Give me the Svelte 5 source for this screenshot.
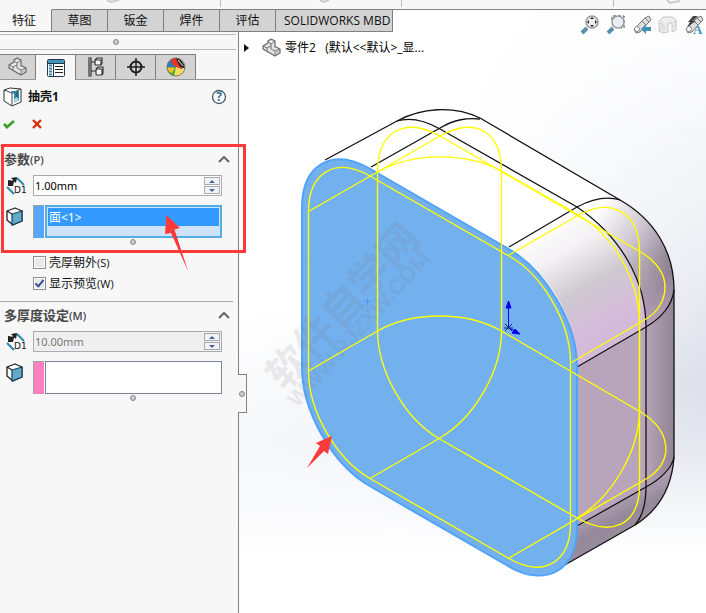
<script lang="ts">
	type Section = {
		id: string;
		title: string;
		key: string;
		value: string;
		disabled: boolean;
		swatch: string;
		items: string[];
	};

	const commandTabs = ['特征', '草图', '钣金', '焊件', '评估', 'SOLIDWORKS MBD'];
	const managerTabs = [
		{ id: 'tree', label: '设计树' },
		{ id: 'props', label: '属性' },
		{ id: 'config', label: '配置' },
		{ id: 'dimxpert', label: '尺寸' },
		{ id: 'display', label: '外观' },
	];
	const viewTools = [
		{ id: 'fit', label: '整屏显示' },
		{ id: 'area', label: '局部放大' },
		{ id: 'previous', label: '上一视图' },
		{ id: 'section', label: '剖面视图' },
		{ id: 'annotation', label: '注解视图' },
	];
	const sections: Section[] = [
		{ id: 'params', title: '参数', key: '(P)', value: '1.00mm', disabled: false, swatch: 'blue', items: ['面<1>'] },
		{ id: 'multi', title: '多厚度设定', key: '(M)', value: '10.00mm', disabled: true, swatch: 'pink', items: [] },
	];

	let activeCommand = $state('特征');
	let activeManager = $state('props');
	let outward = $state(false);
	let preview = $state(true);
	let closed = $state<string[]>([]);

	function toggle(id: string) {
		closed = closed.includes(id) ? closed.filter((c) => c !== id) : [...closed, id];
	}
</script>

{#snippet partIcon()}
	<svg class="part-icon" width="20" height="20" viewBox="0 0 20 20" aria-hidden="true">
		<path d="M1 8 L6 5 V3 L9 1 L13 3 V9 L14 9 L18 11 V15 L13 18 L1 11 Z" fill="#e4e4e4" stroke="#666" stroke-width="1.2" stroke-linejoin="round" />
		<path d="M1 8 L5 10 L9 8 V6 L6 4 M9 6 L13 3 M5 10 V13 M9 8 V11 L13 13 L18 11 M13 13 V18" fill="none" stroke="#777" stroke-width="1" />
		<path d="M14 14 L17 12 V14 L14 16 Z" fill="#bbb" />
	</svg>
{/snippet}

{#snippet managerIcon(id: string)}
	{#if id === 'tree'}
		{@render partIcon()}
	{:else if id === 'props'}
		<svg width="18" height="18" viewBox="0 0 18 18" aria-hidden="true">
			<rect x=".5" y=".5" width="17" height="17" rx="1" fill="#fff" stroke="#24394a" />
			<rect x="1" y="1" width="16" height="3" fill="#4496bd" />
			<path d="M1 4.500 H17 M6.500 5 V17" stroke="#24394a" />
			<path d="M2 6.500 H5 M2 9.500 H5 M2 12.500 H5 M2 15.500 H5" stroke="#3684ad" stroke-width="2" />
			<path d="M8 7.500 H16 M8 10.500 H16 M8 13.500 H16" stroke="#222" />
		</svg>
	{:else if id === 'config'}
		<svg width="18" height="20" viewBox="0 0 18 20" fill="none" stroke="#333" stroke-width="1.200" aria-hidden="true">
			<path d="M1 1 H4 V19 H1 M2 2 V18 M4 5 H8 M4 14 H9" />
			<rect x="8" y="3" width="6" height="5" rx="1" fill="#f5f5f5" />
			<path d="M8 3 L10 1 H15 V6 L14 8" />
			<rect x="9" y="12" width="6" height="6" rx="1" fill="#f5f5f5" />
			<path d="M9 12 L11 10 H16 V16 L15 18" />
		</svg>
	{:else if id === 'dimxpert'}
		<svg width="18" height="18" viewBox="0 0 18 18" fill="none" stroke="#1c1c1c" stroke-width="2" aria-hidden="true">
			<circle cx="9" cy="9" r="5.500" />
			<path d="M9 0 V18 M0 9 H18" stroke-width="1.500" />
		</svg>
	{:else}
		<svg width="20" height="20" viewBox="0 0 20 20" aria-hidden="true">
			<path d="M10 10 L1 11 A9 9 0 0 1 10 1 Z" fill="#2680be" />
			<path d="M5 2.500 Q9 0 13 2 L17 14 L10 10 Q5 8 5 2.500 Z" fill="#e8332a" />
			<path d="M10 10 L18 13 A9 9 0 0 1 8 19 Z" fill="#f3dc62" />
			<path d="M1 10 L10 10 L8 19 A9 9 0 0 1 1 10 Z" fill="#4cae31" />
			<path d="M1 11 Q6 10 9 11 L6 16 Q2 15 1 11Z" fill="#f5bd2c" />
			<path d="M10 1 Q17 2 19 11 Q13 12 10 1Z" fill="#222" />
			<path d="M12 3 L17 9" stroke="#eee" />
			<circle cx="10" cy="10" r="9" fill="none" stroke="#77664d" stroke-width=".8" />
		</svg>
	{/if}
{/snippet}

{#snippet thicknessIcon()}
	<svg class="row-icon" width="20" height="20" viewBox="0 0 20 20" aria-hidden="true">
		<path d="M1 11 L8 18 M11 2 L18 9" stroke="#2d87a9" stroke-width="2" />
		<path d="M3 9 L10 3" stroke="#222" stroke-width="2" />
		<path d="M2 4 L8 5 L7 10 L2 10 Z M5 2 L11 1 L10 7 Z" fill="#222" />
		<text x="8" y="17">D1</text>
	</svg>
{/snippet}

{#snippet faceIcon()}
	<svg class="row-icon" width="18" height="20" viewBox="0 0 18 20" aria-hidden="true">
		<path d="M1 4 L9 1 L16 4 V14 L7 18 L1 13 Z" fill="#fff" stroke="#222" stroke-width="1.300" stroke-linejoin="round" />
		<path d="M6 7 L16 4 V14 L6 18 Z" fill="#65a9c8" stroke="#174b66" stroke-width="1.300" />
		<path d="M1 4 L6 7" stroke="#222" stroke-width="1.300" />
	</svg>
{/snippet}

{#snippet viewIcon(id: string)}
	<svg width="20" height="20" viewBox="0 0 20 20" aria-hidden="true">
		{#if id === 'fit' || id === 'area'}
			{#if id === 'area'}
				<path d="M6 5 V1 H18 V13 H15" fill="none" stroke="#444" stroke-dasharray="3 2" />
			{/if}
			<path d="M2 18 L7 13" stroke="#5b8fae" stroke-width="4" />
			<circle cx="12" cy="7" r="6" fill="#e9eff4" stroke="#999" stroke-width="1.500" />
			{#if id === 'fit'}
				<path d="M12 2 L14 4 H10Z M12 12 L10 10 H14Z M7 7 L9 5 V9Z M17 7 L15 9 V5Z" fill="#222" />
			{/if}
		{:else if id === 'section'}
			<path d="M1 6 L5 2 H14 L18 5 V15 L14 17 V8 H10 V17 L5 18 L1 16 Z" fill="#eee" stroke="#c4c4c4" />
			<path d="M2 9 L5 7 M2 12 L6 9 M2 15 L7 11 M5 16 L8 13 M15 8 L17 6 M15 12 L17 10" stroke="#ccc" />
		{:else}
			<path d="M2 14 L10 6 L13 3 L17 1 L19 5 L16 8 L8 17 L4 18 Z" fill="#ddd" stroke="#777" stroke-linejoin="round" />
			<path d="M10 6 L14 10 M13 3 L17 7" stroke="#777" />
			<circle cx="5" cy="14" r="2.500" fill="#fff" stroke="#888" />
			{#if id === 'previous'}
				<path d="M9 14 L14 9 V12 H19 V16 H14 V19 Z" fill="#438eb7" />
			{:else}
				<path d="M4 7 L9 1 H14 L9 6 H12 L3 12 L6 7Z" fill="#444" />
				<text class="view-letter" x="9" y="19">A</text>
			{/if}
		{/if}
	</svg>
{/snippet}

<div class="app">
	<header>
		<div class="ribbon-edge">
			<svg viewBox="0 0 706 9" preserveAspectRatio="xMinYMin slice" aria-hidden="true">
				<path d="M107 0 L111 2 L119 0 M320 0 L324 2 L329 0 M667 0 L670 3 L680 1" fill="none" stroke="#ccc" stroke-width="2" />
				<path d="M220.500 0 V7 M401.500 0 V7 M613.500 0 V7" stroke="#bbb" />
			</svg>
		</div>
		<nav class="command-tabs">
			{#each commandTabs as tab}
				<button class:active={activeCommand === tab} onclick={() => (activeCommand = tab)}>{tab}</button>
			{/each}
		</nav>
	</header>

	<main>
		<aside>
			<div class="grip"><i class="dot"></i></div>
			<nav class="manager-tabs">
				{#each managerTabs as tab}
					<button
						class:active={activeManager === tab.id}
						aria-label={tab.label}
						onclick={() => (activeManager = tab.id)}
					>
						{@render managerIcon(tab.id)}
					</button>
				{/each}
			</nav>

			<div class="feature-title">
				<svg width="20" height="20" viewBox="0 0 20 20" aria-hidden="true">
					<path d="M1 3 L7 1 L18 2 V15 L9 19 L1 14 Z" fill="#fff" stroke="#333" stroke-linejoin="round" />
					<path d="M1 3 L9 6 L18 2 M9 6 V19" fill="none" stroke="#444" />
					<path d="M8 4 L16 4 V13 L11 16 L11 7 Z" fill="#2f86aa" />
					<path d="M11 12 L14 10 L16 13 L11 16 Z" fill="#a7d5e6" />
					<path d="M14 5 V10" stroke="#174f6b" />
				</svg>
				<h1>抽壳1</h1>
				<button class="plain help" aria-label="帮助">
					<svg width="16" height="16" viewBox="0 0 16 16" aria-hidden="true">
						<circle cx="8" cy="8" r="6.500" fill="#fff" stroke="#41576a" stroke-width="1.300" />
						<text class="question" x="8" y="12">?</text>
					</svg>
				</button>
			</div>
			<div class="confirm">
				<button class="plain" aria-label="确定">
					<svg width="14" height="12" viewBox="0 0 14 12" aria-hidden="true">
						<path d="M2 6 L5 9 L12 3" fill="none" stroke="#3ca22c" stroke-width="2.800" />
					</svg>
				</button>
				<button class="plain" aria-label="取消">
					<svg width="12" height="12" viewBox="0 0 12 12" aria-hidden="true">
						<path d="M2 2 L10 10 M10 2 L2 10" stroke="#d92b0c" stroke-width="2.400" />
					</svg>
				</button>
			</div>

			{#each sections as s}
				<section>
					<h2>
						<span>{s.title}<small>{s.key}</small></span>
						<button class="plain" aria-label="折叠{s.title}" onclick={() => toggle(s.id)}>
							<svg width="12" height="8" viewBox="0 0 12 8" aria-hidden="true">
								<path d="M1 7 L6 2 L11 7" fill="none" stroke="#666" stroke-width="2" />
							</svg>
						</button>
					</h2>
					{#if !closed.includes(s.id)}
						<div class="row">
							<label for="{s.id}-thickness" aria-label="厚度">{@render thicknessIcon()}</label>
							<div class="spin" class:disabled={s.disabled}>
								<input id="{s.id}-thickness" type="text" value={s.value} disabled={s.disabled} />
								<div class="spin-buttons">
									<button aria-label="增加" disabled={s.disabled}><i class="up"></i></button>
									<button aria-label="减少" disabled={s.disabled}><i class="down"></i></button>
								</div>
							</div>
						</div>
						<div class="row faces">
							<label for="{s.id}-faces" aria-label="面">{@render faceIcon()}</label>
							<i class="swatch {s.swatch}"></i>
							<select id="{s.id}-faces" multiple size="2" class:focused={s.items.length > 0}>
								{#each s.items as item}
									<option selected>{item}</option>
								{/each}
							</select>
						</div>
						<div class="resize"><i class="dot"></i></div>
						{#if s.id === 'params'}
							<div class="checks">
								<label><input type="checkbox" bind:checked={outward} /><span>壳厚朝外<small>(S)</small></span></label>
								<label><input type="checkbox" bind:checked={preview} /><span>显示预览<small>(W)</small></span></label>
							</div>
						{/if}
					{/if}
				</section>
			{/each}
			<button class="splitter" aria-label="收起面板"><i class="dot"></i></button>
		</aside>

		<div class="viewport">
			<svg class="scene" viewBox="239 10 467 603" role="img" aria-label="零件2">
				<defs>
					<linearGradient id="corner" gradientUnits="userSpaceOnUse" x1="545" y1="225" x2="612" y2="340">
						<stop offset="0" stop-color="#fff" />
						<stop offset=".25" stop-color="#f3f1f3" />
						<stop offset=".55" stop-color="#cfc9d0" />
						<stop offset=".85" stop-color="#d6bcdc" />
						<stop offset="1" stop-color="#d2b9d8" />
					</linearGradient>
					<linearGradient id="cap" gradientUnits="userSpaceOnUse" x1="595" y1="215" x2="675" y2="265">
						<stop offset="0" stop-color="#fff" />
						<stop offset=".5" stop-color="#cdc3cf" />
						<stop offset="1" stop-color="#837785" />
					</linearGradient>
					<linearGradient id="capFade" x1="0" y1="0" x2="0" y2="1">
						<stop offset=".45" stop-color="#cbb2d0" stop-opacity="0" />
						<stop offset="1" stop-color="#c4abc9" stop-opacity=".8" />
					</linearGradient>
					<linearGradient id="side">
						<stop offset="0" stop-color="#b6a3b9" />
						<stop offset=".6" stop-color="#9f90a1" />
						<stop offset="1" stop-color="#938695" />
					</linearGradient>
					<linearGradient id="bottom" gradientUnits="userSpaceOnUse" x1="610" y1="500" x2="628" y2="535">
						<stop offset="0" stop-color="#b3a0b6" />
						<stop offset=".55" stop-color="#94889a" />
						<stop offset="1" stop-color="#9b8d9d" />
					</linearGradient>
				</defs>

				<!-- body -->
				<path d="M325 160 L397 121 C421 108 453 105 480 118 L620 200 C655 220 674 252 674 290 V457 C672 487 659 510 635 525 L563 566 Z" fill="#fff" />
				<path d="M508 248 L577 207 C620 236 646 280 646 327 L577 367 C577 320 550 272 508 248 Z" fill="url(#corner)" />
				<path d="M577 207 C594 198 607 196 620 200 C655 220 674 252 674 290 C672 306 661 318 646 327 C646 280 620 236 577 207 Z" fill="url(#cap)" />
				<path d="M577 207 C594 198 607 196 620 200 C655 220 674 252 674 290 C672 306 661 318 646 327 C646 280 620 236 577 207 Z" fill="url(#capFade)" />
				<path d="M577 367 L646 327 V487 L577 527 Z" fill="#b8a5bb" />
				<path d="M646 327 C661 318 672 306 674 290 V457 C672 470 661 479 646 487 Z" fill="url(#side)" />
				<path d="M577 527 L646 487 C661 479 672 470 674 457 C672 487 659 510 635 525 L563 566 Z" fill="url(#bottom)" />

				<g class="edge">
					<path d="M325 160 L397 121 C421 108 453 105 480 118 L620 200 C655 220 674 252 674 290 V457 C672 487 659 510 635 525 L563 566" />
					<path d="M371 167 L440 128 C455 119 467 118 480 119" />
					<path d="M397 121 C411 117 424 120 440 129 L577 207 C620 236 646 280 646 327 V487 C646 505 642 517 635 525" />
					<path d="M509 247 L577 207 C594 198 607 196 620 200" />
					<path d="M577 367 L646 327 C661 318 672 306 674 290" />
					<path d="M577 526 L646 487 C661 479 672 468 674 457" />
				</g>

				<path
					class="face"
					d="M302 208 C302 164 332 147 370.500 169 L508 248.500 C546 270.500 577 323 577 367 V527 C577 571 546 588 508 566 L370.500 486.500 C332 464.500 302 411 302 367 Z"
				/>

				<g class="watermark" transform="translate(285 392) rotate(-48)">
					<text x="0" y="0">软件自学网</text>
					<text class="site" x="-4" y="20">WWW.RJZXW.COM</text>
				</g>

				<g class="preview">
					<path d="M308.500 211.500 C308.500 172 336 156.500 370 176 L509 256 C543 275 570.500 323 570.500 363 V523 C570.500 563 543 578 509 558.500 L370 478.500 C336 459 308.500 411 308.500 371 Z" />
					<path d="M377.500 332 V171 C378 130 406 117 440 136 L639 251 C656 261 665 274 665 287 C665 300 658 312 646 319 L570.500 363" />
					<path d="M308.500 211.500 L440 136 C474 117 501 130 501.500 171 V332 C501 371 475 418 439 438.500 L370 478.500" />
					<path d="M377.500 172 C413 152 466 152 501.500 171 L577 214 C614 235 639 280 639.500 323 V486 C639 526 611 537 577 518" />
					<path d="M509 255 L577 216 C610 197 639 211 639.500 251 V411 C639 450 613 497 577 518" />
					<path d="M308.500 371 L377.500 331 C413 311 466 311 501.500 331 L639 411 C673 431 674 463 646 479 L509 558" />
					<path d="M377.500 331 C378 371 404 418 439 438.500 L577 518" />
				</g>

				<path d="M364 301.500 H371 M367.500 298 V305" stroke="#4a9bf0" />
				<g stroke="#0000f0" fill="#0000f0">
					<path d="M508.500 328 V304 M508.500 328 L515 331" />
					<path d="M508.500 301 L511 308 H506 Z M520 334 L512 333 L515 329 Z" />
					<path d="M504 328 H513 M505 324 L512 331 M505 331 L512 324" stroke="#002080" />
				</g>
			</svg>

			<div class="tree-root">
				<i class="expand"></i>
				{@render partIcon()}
				<span>零件2&nbsp;&nbsp; (默认&lt;&lt;默认&gt;_显...</span>
			</div>
			<div class="view-tools">
				{#each viewTools as tool}
					<button class="plain" aria-label={tool.label}>{@render viewIcon(tool.id)}</button>
				{/each}
			</div>
		</div>
	</main>

	<svg class="marks" width="706" height="613" viewBox="0 0 706 613" aria-hidden="true">
		<rect x="2.500" y="145.500" width="242" height="106" fill="none" stroke="#fc3a3a" stroke-width="3" />
		<path d="M166.500 215 L180 228 L174.500 229.500 L188 271 L171 233 L165 234 Z" fill="#fc3a3a" />
		<path d="M332 436 L328 454 L324 451 L307 468 L320 446 L316 443 Z" fill="#fc3a3a" />
	</svg>
</div>

<style>
	:global(body) {
		background: #f7f7f7;
	}
	.app {
		position: relative;
		display: flex;
		flex-direction: column;
		min-height: 100vh;
		overflow: hidden;
		font-family: 'Open Sans', 'Noto Sans CJK SC', sans-serif;
		font-size: 12px;
		line-height: 16px;
		color: #111;
	}
	button {
		font: inherit;
		color: inherit;
		margin: 0;
	}
	.plain {
		display: flex;
		padding: 0;
		border: 0;
		background: none;
	}
	i {
		display: block;
	}
	svg {
		display: block;
	}

	.ribbon-edge {
		height: 9px;
		background: #f7f7f7;
		overflow: hidden;
		border-bottom: 1px solid #808080;
	}
	.ribbon-edge svg {
		width: 100%;
		height: 9px;
	}
	.command-tabs {
		position: relative;
		z-index: 1;
		display: flex;
		width: max-content;
		margin-top: -1px;
	}
	.command-tabs button {
		min-width: 56px;
		height: 23px;
		padding: 0 2px 0 8px;
		border: 1px solid #808080;
		border-left-width: 0;
		background: #d3d3d3;
		white-space: nowrap;
	}
	.command-tabs button:not(:last-child) {
		padding: 0 8px;
	}
	.command-tabs button.active {
		min-width: 52px;
		padding: 0 14px 0 11px;
		border-top-color: #f7f7f7;
		background: #f7f7f7;
	}

	main {
		flex: 1;
		display: flex;
	}
	aside {
		position: relative;
		z-index: 1;
		flex: none;
		width: 238px;
		border-right: 1px solid #808080;
		background: #f7f7f7;
	}
	.dot {
		width: 6px;
		height: 6px;
		box-sizing: border-box;
		border: 1px solid #888;
		border-radius: 50%;
		background: #ccc;
	}
	.grip {
		display: flex;
		align-items: center;
		justify-content: center;
		height: 14px;
		margin: 2px 2px 4px 0;
		padding-right: 4px;
		border: solid #bbb;
		border-width: 1px 0;
	}
	.manager-tabs {
		display: flex;
		margin-right: 2px;
		border-bottom: 1px solid #999;
	}
	.manager-tabs button {
		display: flex;
		align-items: center;
		justify-content: center;
		width: 40px;
		height: 25px;
		padding: 0;
		border: solid #808080;
		border-width: 1px 1px 0 0;
		background: #d3d3d3;
	}
	.manager-tabs button:first-child {
		width: 36px;
	}
	.manager-tabs button.active {
		margin-bottom: -1px;
		height: 26px;
		background: #f7f7f7;
	}

	.feature-title {
		display: flex;
		align-items: center;
		gap: 5px;
		height: 34px;
		padding: 0 11px 0 3px;
	}
	h1 {
		flex: 1;
		margin: 0;
		font-size: 12px;
		font-weight: 700;
	}
	.question {
		font: 700 12px 'Open Sans', sans-serif;
		text-anchor: middle;
		fill: #28749c;
	}
	.confirm {
		display: flex;
		gap: 15px;
		height: 31px;
		padding: 4px 0 0 2px;
		box-sizing: border-box;
	}

	section {
		margin-right: 5px;
		padding-right: 11px;
		border-top: 1px solid #aaa;
	}
	h2 {
		display: flex;
		align-items: center;
		justify-content: space-between;
		box-sizing: border-box;
		height: 29px;
		margin: 0;
		padding: 0 0 3px 4px;
		font-size: 13px;
		font-weight: 700;
		color: #484848;
	}
	h2 button {
		margin-right: -8px;
	}
	h2 small {
		font-size: 11px;
		font-weight: 600;
	}
	.row {
		display: flex;
		align-items: center;
		margin-bottom: 9px;
	}
	.row > label {
		flex: none;
		width: 27px;
		padding-left: 6px;
	}
	.row-icon text {
		font: 9px 'DejaVu Sans', sans-serif;
		fill: #111;
	}
	.spin {
		flex: 1;
		min-width: 0;
		display: flex;
		height: 21px;
		box-sizing: border-box;
		border: 1px solid #a9abb3;
		background: #fff;
	}
	.spin.disabled {
		background: #efefef;
	}
	.spin input {
		flex: 1;
		min-width: 0;
		padding: 0 1px;
		border: 0;
		background: none;
		font: 11px 'Noto Sans', sans-serif;
		color: #000;
	}
	.spin input:disabled {
		color: #777;
	}
	.spin-buttons {
		display: flex;
		flex-direction: column;
		justify-content: space-between;
		padding: 1px;
	}
	.spin-buttons button {
		display: flex;
		align-items: center;
		justify-content: center;
		box-sizing: border-box;
		width: 16px;
		height: 8px;
		padding: 0;
		border: 1px solid #aaa;
		background: #f2f2f2;
	}
	.up,
	.down {
		border: 3px solid transparent;
		border-top-width: 0;
		border-bottom-color: #4a5ea8;
	}
	.down {
		border-top: 3px solid #4a5ea8;
		border-bottom-width: 0;
	}
	.faces {
		align-items: flex-start;
		height: 33px;
		margin-bottom: 0;
	}
	.faces > label {
		padding-top: 2px;
	}
	.swatch {
		width: 11px;
		height: 33px;
		margin-right: 1px;
		box-sizing: border-box;
		border: solid #a0a0a0;
		border-width: 1px 0 0 1px;
	}
	.swatch.blue {
		background: #55a7fc;
	}
	.swatch.pink {
		background: #ff80c0;
	}
	select {
		flex: 1;
		min-width: 0;
		height: 33px;
		box-sizing: border-box;
		padding: 0;
		border: 1px solid #7b8499;
		border-radius: 0;
		outline: 0;
		background: #fff;
		font: 12px 'Noto Sans', 'Noto Sans CJK SC', sans-serif;
		overflow: hidden;
	}
	select.focused {
		padding: 1px;
		border: 2px solid #54aee6;
		background: #cfe3f8;
	}
	option {
		min-height: 16px;
		padding: 0 1px;
		line-height: 16px;
	}
	option:checked {
		background: linear-gradient(#3399ff, #3399ff);
		color: #fff;
		-webkit-text-fill-color: #fff;
	}
	.resize {
		display: flex;
		justify-content: center;
		padding: 1px 0 7px 44px;
	}
	.checks {
		padding: 0 0 7px 33px;
	}
	.checks label {
		display: flex;
		align-items: center;
		gap: 3px;
		height: 21px;
	}
	.checks small {
		font-size: 11px;
	}
	.checks input {
		appearance: none;
		display: grid;
		place-items: center;
		box-sizing: border-box;
		width: 13px;
		height: 13px;
		margin: 0;
		border: 1px solid #8e8f8f;
		background: #e8e8e8;
		box-shadow: inset 0 0 0 1px #fff;
	}
	.checks input:checked::before {
		content: '';
		width: 3px;
		height: 7px;
		margin-top: -2px;
		border: solid #3b4f94;
		border-width: 0 2px 2px 0;
		transform: rotate(40deg);
	}
	.splitter {
		position: absolute;
		left: 238px;
		top: 342px;
		display: grid;
		place-items: center;
		width: 9px;
		height: 39px;
		padding: 0;
		border: 1px solid #808080;
		border-left: 0;
		background: #f7f7f7;
	}

	.viewport {
		position: relative;
		flex: 1;
		min-width: 0;
		margin-top: -22px;
		background:
			radial-gradient(ellipse at 0 0, #fff 35%, rgba(255, 255, 255, 0) 85%),
			linear-gradient(#fdfdfe, #eceef4 35%, #dcdfe9 62%, #e6e8f0 72%, #fff 90%);
	}
	.scene {
		width: 100%;
		height: auto;
	}
	.edge {
		fill: none;
		stroke: #111;
		stroke-width: 1.3px;
	}
	.face {
		fill: #73b0ee;
		stroke: #51a3fa;
		stroke-width: 2px;
	}
	.preview {
		fill: none;
		stroke: #ff0;
		stroke-width: 1.4px;
	}
	.watermark {
		font: 700 41px 'Noto Sans CJK SC', sans-serif;
		fill: #777;
		opacity: 0.13;
	}
	.watermark .site {
		font: 700 22px 'Liberation Sans', sans-serif;
	}
	.tree-root {
		position: absolute;
		left: 5px;
		top: 28px;
		display: flex;
		align-items: center;
		gap: 3px;
		color: #000;
	}
	.tree-root .part-icon {
		margin-left: 10px;
	}
	.expand {
		border: 4px solid transparent;
		border-left: 5px solid #111;
		border-right: 0;
	}
	.view-tools {
		position: absolute;
		right: 2px;
		top: 5px;
		display: flex;
		gap: 6px;
	}
	.view-letter {
		font: 700 13px 'Liberation Serif', serif;
		fill: #438eb7;
	}
	.view-tools svg {
		overflow: visible;
	}
	.marks {
		position: absolute;
		left: 0;
		top: 0;
		pointer-events: none;
		z-index: 2;
	}
</style>
